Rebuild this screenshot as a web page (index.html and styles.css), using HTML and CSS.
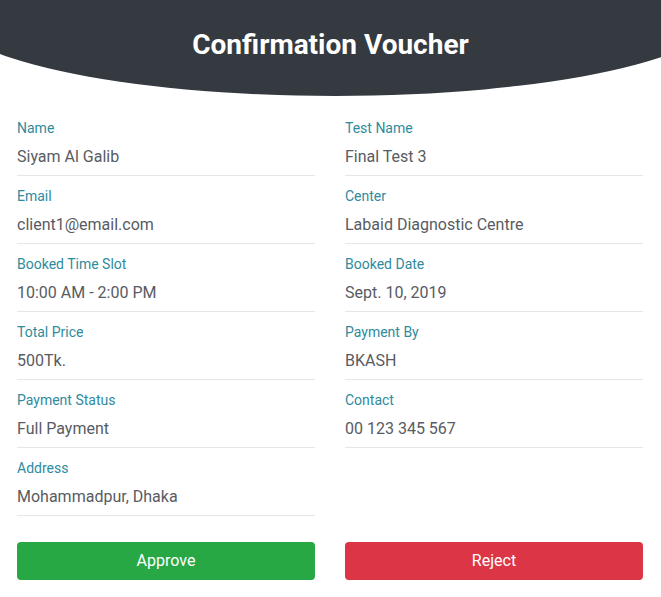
FILE: index.html
```html
<!DOCTYPE html>
<html lang="en">
<head>
<meta charset="utf-8">
<title>Confirmation Voucher</title>
<link rel="stylesheet" href="styles.css">
</head>
<body>
<header class="banner">
  <h1 class="banner-title">Confirmation Voucher</h1>
</header>
<main class="voucher">
  <div class="fields">
    <div class="field"><div class="label">Name</div><div class="value">Siyam Al Galib</div></div>
    <div class="field"><div class="label">Test Name</div><div class="value">Final Test 3</div></div>
    <div class="field"><div class="label">Email</div><div class="value">client1@email.com</div></div>
    <div class="field"><div class="label">Center</div><div class="value">Labaid Diagnostic Centre</div></div>
    <div class="field"><div class="label">Booked Time Slot</div><div class="value">10:00 AM - 2:00 PM</div></div>
    <div class="field"><div class="label">Booked Date</div><div class="value">Sept. 10, 2019</div></div>
    <div class="field"><div class="label">Total Price</div><div class="value">500Tk.</div></div>
    <div class="field"><div class="label">Payment By</div><div class="value">BKASH</div></div>
    <div class="field"><div class="label">Payment Status</div><div class="value">Full Payment</div></div>
    <div class="field"><div class="label">Contact</div><div class="value">00 123 345 567</div></div>
    <div class="field"><div class="label">Address</div><div class="value">Mohammadpur, Dhaka</div></div>
  </div>
  <div class="actions">
    <button class="btn btn-approve" type="button">Approve</button>
    <button class="btn btn-reject" type="button">Reject</button>
  </div>
</main>
</body>
</html>
```

FILE: styles.css
```css
* { box-sizing: border-box; }

body {
  margin: 0;
  background: #ffffff;
  font-family: Roboto, "Liberation Sans", Arial, sans-serif;
}

.banner {
  height: 96px;
  background: #343a40;
  padding-top: 29px;
  clip-path: ellipse(390px 86px at 335px 10px);
}

.banner-title {
  margin: 0;
  text-align: center;
  color: #ffffff;
  font-size: 28px;
  font-weight: 700;
  line-height: 31px;
}

.voucher {
  padding: 22px 18px 0 17px;
}

.fields {
  display: grid;
  grid-template-columns: 298px 298px;
  column-gap: 30px;
  row-gap: 10px;
}

.field {
  padding-bottom: 6px;
  border-bottom: 1px solid #e6e6e6;
}

.label {
  font-size: 14px;
  line-height: 21px;
  color: #2e8b9d;
}

.value {
  margin-top: 6px;
  font-size: 16px;
  line-height: 24px;
  color: #585b63;
}

.actions {
  display: grid;
  grid-template-columns: 298px 298px;
  column-gap: 30px;
  margin-top: 26px;
}

.btn {
  height: 38px;
  border: none;
  border-radius: 4px;
  font-family: inherit;
  font-size: 16px;
  line-height: 24px;
  color: #ffffff;
  padding: 0 0 1px;
}

.btn-approve { background: #28a745; }
.btn-reject { background: #dc3545; }
```
